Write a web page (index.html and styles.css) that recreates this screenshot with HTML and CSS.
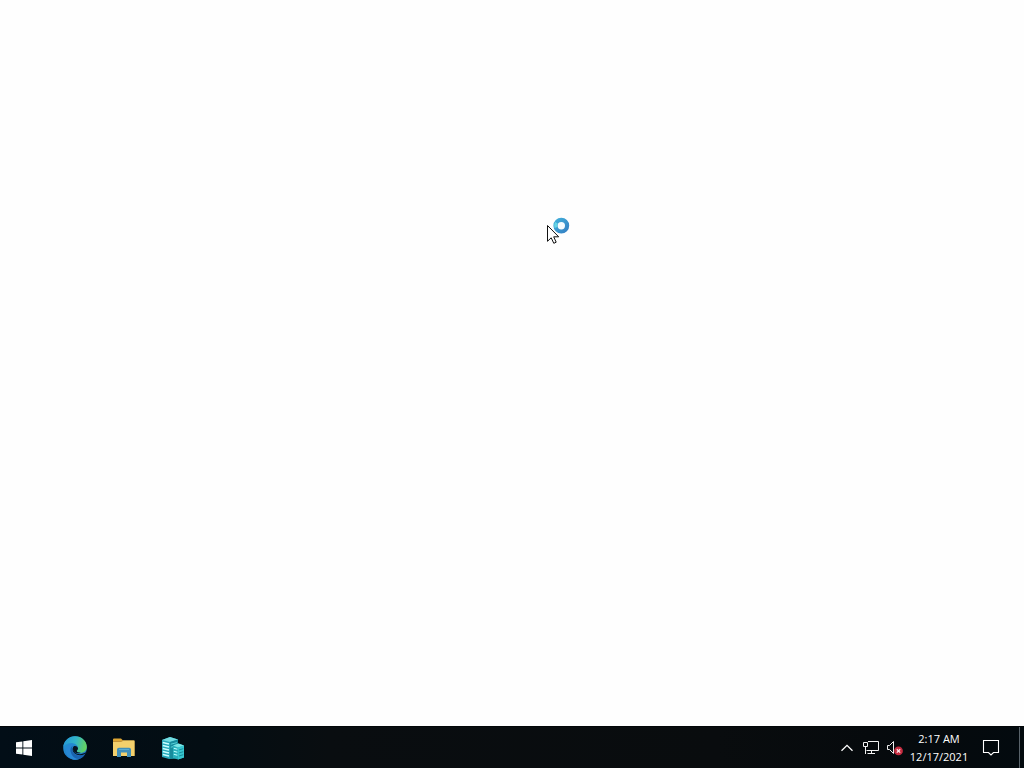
FILE: index.html
```html
<!DOCTYPE html>
<html lang="en">
<head>
<meta charset="utf-8">
<title>Desktop</title>
<link rel="stylesheet" href="styles.css">
</head>
<body>
<main class="desktop">
  <svg class="cursor" width="24" height="28" viewBox="0 0 24 28" aria-hidden="true">
    <defs><linearGradient id="ring" x2="1" y2="1"><stop stop-color="#41add9"/><stop offset="1" stop-color="#3481c4"/></linearGradient></defs>
    <circle cx="14.3" cy="8.7" r="5.8" fill="#f4fbff" stroke="url(#ring)" stroke-width="4.2"/>
    <path d="M9.4 5.8A5.8 5.8 0 0 0 9 10.6" fill="none" stroke="#65d5e5" stroke-width="3"/>
    <path d="M.5 8.5V24.3L4.2 20.8L6.8 26.3L9.2 25.2L6.7 19.8H11.7Z" fill="#fff" stroke="#111" stroke-width="1"/>
  </svg>
</main>
<footer class="taskbar">
  <button class="item start" aria-label="Start">
    <svg width="16" height="16" viewBox="0 0 16 16" fill="#fff"><path d="M0 2.3L6.4 1.4V7.5H0ZM7.3 1.2L16 0V7.5H7.3ZM0 8.4H6.4V14.6L0 13.7ZM7.3 8.4H16V16L7.3 14.8Z"/></svg>
  </button>
  <nav class="apps" aria-label="Pinned apps">
    <button class="item" aria-label="Microsoft Edge">
      <svg width="24" height="24" viewBox="0 0 24 24">
        <defs>
          <linearGradient id="e1" x1="0" x2="1" y1=".3" y2=".5"><stop stop-color="#2597d6"/><stop offset=".5" stop-color="#32b5c8"/><stop offset="1" stop-color="#66d35c"/></linearGradient>
          <linearGradient id="e2" x2=".4" y2="1"><stop stop-color="#249bd8"/><stop offset="1" stop-color="#2177c4"/></linearGradient>
        </defs>
        <circle cx="12" cy="12" r="11.8" fill="url(#e2)"/>
        <path d="M.3 10.8C1.2 4.5 6.2.2 12 .2C18.8.2 23.8 5.1 23.8 10.7C23.8 14.5 21.2 16.7 17.7 16.7C15.3 16.7 13.8 15.9 13.8 15C13.8 14.2 15 13.8 15 12C15 9.2 11.8 7 8.2 7C4.4 7 1.5 8.8.3 10.8Z" fill="url(#e1)"/>
        <path d="M9.7 9.8C7.3 11.2 6.8 14.4 8.2 17.2C9.8 20.8 13.4 23.2 17.1 22.7C13.5 24.6 8.4 24 5.2 20.7C1.8 17.2 2.5 11.8 5.5 9.3C6.8 8.3 9.3 8.3 11.5 9.2Z" fill="#2787d4"/>
        <path d="M9.7 9.8C8.5 12 8.7 15.5 11.2 17.7C14.2 20.2 18.3 19.9 22.1 17.9C20.9 20.2 19 22 17.1 22.7C12.8 23.2 9.6 20.8 8.2 17.2C6.8 14.4 7.3 11.2 9.7 9.8Z" fill="#1a62b0"/>
        <path d="M11.9 10.3C9.6 11.4 9.7 14.7 12 16.5C14.7 18.9 19.6 18.6 23.2 16C24 15.4 24.6 16.4 23.8 17.1L22 18.1C18 20 14.1 19.5 11.4 17.3C8.9 15 9 11.5 11.9 10.3Z" fill="#071421"/>
        <path d="M11.4 10C13.6 9.7 15.1 11.2 15 12.8C14.8 14.1 13.8 14.2 13.8 15C13.8 15.9 15.3 16.7 17.7 16.7C14.4 18.1 10.5 16.4 10 13.5C9.7 11.8 10.1 10.6 11.4 10Z" fill="#071421"/>
      </svg>
    </button>
    <button class="item" aria-label="File Explorer">
      <svg width="24" height="20" viewBox="0 0 24 20">
        <path d="M1 1.4Q1 .5 2 .5H9L11 2.5H21.5Q22.5 2.5 22.5 3.5V18H1Z" fill="#dfa734"/>
        <path d="M1 3.5H9L11 2.5H22.5V18H1Z" fill="#f4d06c"/>
        <path d="M1 3.5H9L11 2.5" fill="none" stroke="#b98831" stroke-width=".8"/>
        <path d="M5 19V11.5Q5 9.8 6.8 9.8H17.2Q19 9.8 19 11.5V19H15V14.5H9V19Z" fill="#418fb9"/>
        <path d="M7 11.5H17" stroke="#5cadd0"/>
      </svg>
    </button>
    <button class="item" aria-label="Server Manager">
      <svg width="24" height="24" viewBox="0 0 24 24">
        <path d="M1 4L9 1L17 3.5V22L8 23L1 21Z" fill="#26a9ba"/>
        <path d="M1 4L9 1L17 3.5L9 6Z" fill="#72dce1"/>
        <path d="M9 6L17 3.5V22L9 23Z" fill="#178c9d"/>
        <path d="M1.8 6.5L8 8M1.8 9.5L8 11M1.8 12.5L8 14M1.8 15.5L8 17M1.8 18.5L8 20" stroke="#c9ffff" stroke-width="1.3"/>
        <path d="M9.8 8.2L16 6.6M9.8 11.2L13 10.4" stroke="#56d1d8"/>
        <path d="M12 9.5L17.5 7.5L23 9.5V21.5L17 23.5L12 22Z" fill="#29afbc"/>
        <path d="M12 9.5L17.5 7.5L23 9.5L17 11.5Z" fill="#7ce6e5"/>
        <path d="M17 11.5L23 9.5V21.5L17 23.5Z" fill="#37c6cf"/>
        <path d="M12.8 12.3L16.4 13.3M12.8 15.3L16.4 16.3M12.8 18.3L16.4 19.3" stroke="#bcffff" stroke-width="1.1"/>
        <path d="M18 14L22.3 12.7M18 17L22.3 15.7M18 20L22.3 18.7" stroke="#168c9b"/>
      </svg>
    </button>
  </nav>
  <div class="tray">
    <button class="item small" aria-label="Show hidden icons">
      <svg width="14" height="8" viewBox="0 0 14 8"><path d="M1.5 6.8L7 1.3L12.5 6.8" fill="none" stroke="#fff" stroke-width="1.3"/></svg>
    </button>
    <button class="item small" aria-label="Network">
      <svg width="16" height="14" viewBox="0 0 16 14" fill="none" stroke="#f2f2f2"><path d="M5 .5H15.5V9.5H3.5M8.5 9.5V12.5M4.5 12.5H12M2.5 5V13M.5 1.5H4.5V5.5H.5Z"/></svg>
    </button>
    <button class="item small" aria-label="Volume muted">
      <svg width="16" height="16" viewBox="0 0 16 16"><path d="M.5 5.5H2.5L6.5 1.5V13.5L2.5 9.5H.5Z" fill="none" stroke="#eee"/><circle cx="11.5" cy="10.9" r="4.4" fill="#c52c40"/><path d="M9.8 9.2L13.2 12.6M13.2 9.2L9.8 12.6" stroke="#ffe3e6" stroke-width="1.3"/></svg>
    </button>
    <button class="item clock"><time datetime="02:17">2:17 AM</time><time datetime="2021-12-17">12/17/2021</time></button>
    <button class="item notices" aria-label="Notifications">
      <svg width="18" height="18" viewBox="0 0 18 18"><path d="M1.5 1.5H16.5V13.5H11.5L9 16L6.5 13.5H1.5Z" fill="none" stroke="#fff" stroke-width="1.1"/></svg>
    </button>
    <button class="item peek" aria-label="Show desktop"></button>
  </div>
</footer>
</body>
</html>
```
FILE: styles.css
```css
* { box-sizing: border-box; }
body {
  display: flex;
  flex-direction: column;
  min-height: 100vh;
  margin: 0;
  background: #fefefe;
  font-family: "Open Sans", "Noto Sans", sans-serif;
}
.desktop { position: relative; flex: 1; }
.cursor { position: absolute; left: 547px; top: 217px; }
.taskbar {
  display: flex;
  height: 42px;
  background: linear-gradient(90deg, #020e17 0, #030d13 20%, #090d10 32%, #090c0e 70%, #060a0d 85%, #030a0e 100%);
  border-top: 1px solid #020608;
}
.item {
  display: flex;
  align-items: center;
  justify-content: center;
  width: 48px;
  padding: 1px 0 0;
  border: 0;
  background: none;
  color: #fff;
  font: inherit;
}
.item:hover { background-color: #ffffff1a; }
.apps { display: flex; gap: 1px; margin-left: 3px; }
.tray { display: flex; margin-left: auto; }
.item.small { width: 24px; }
.item.clock {
  flex-direction: column;
  width: 64px;
  font-size: 11px;
  line-height: 18px;
  white-space: nowrap;
}
.item.notices { width: 40px; margin-right: 8px; }
.item.peek { width: 5px; border-left: 1px solid #59636a; }
```
